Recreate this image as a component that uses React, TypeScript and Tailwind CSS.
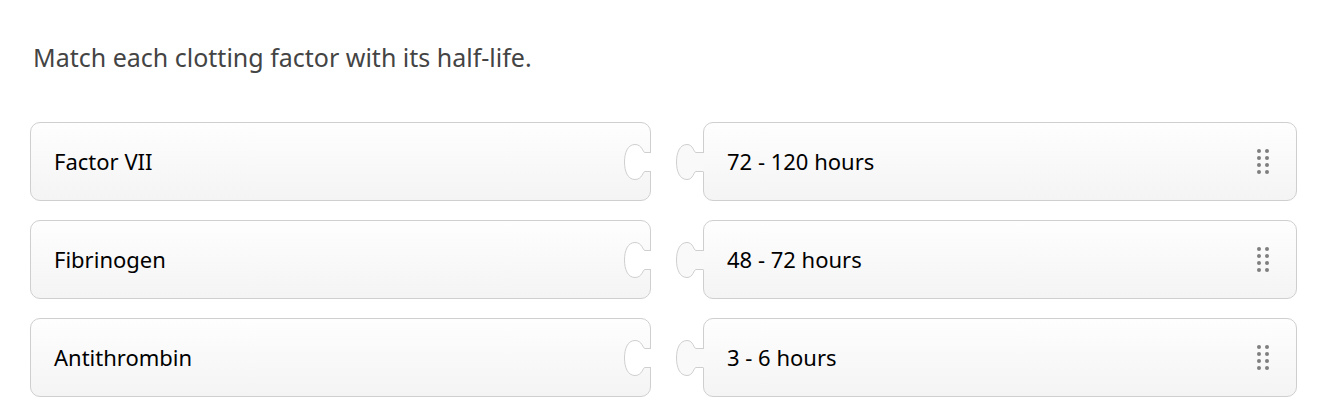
const rows = [
  { left: "Factor VII", right: "72 - 120 hours" },
  { left: "Fibrinogen", right: "48 - 72 hours" },
  { left: "Antithrombin", right: "3 - 6 hours" },
];

function Notch() {
  const d =
    "M28 9.5 H22 C19.5 9.5 19.5 1.5 12 1.5 C4.5 1.5 1.5 10 1.5 19 C1.5 28 4.5 36.5 12 36.5 C19.5 36.5 19.5 28.5 22 28.5 H28";
  return (
    <svg
      className="absolute right-[-1px] top-1/2 -translate-y-1/2"
      width="28"
      height="38"
      viewBox="0 0 28 38"
    >
      <path d={d + " Z"} fill="#ffffff" />
      <path d={d} fill="none" stroke="#cfcfcf" strokeWidth="1" />
    </svg>
  );
}

function Knob() {
  const d =
    "M29 9.5 H21 C18.5 9.5 18.5 1.5 12 1.5 C4.5 1.5 1.5 10 1.5 19 C1.5 28 4.5 36.5 12 36.5 C18.5 36.5 18.5 28.5 21 28.5 H29";
  return (
    <svg
      className="absolute left-[-29px] top-1/2 -translate-y-1/2"
      width="29"
      height="38"
      viewBox="0 0 29 38"
    >
      <path d={d + " Z"} fill="#f9f9f9" />
      <path d={d.replace(" H29", " H28")} fill="none" stroke="#cfcfcf" strokeWidth="1" />
    </svg>
  );
}

function Grip() {
  return (
    <div className="grid grid-cols-2 gap-x-[4px] gap-y-[3px]">
      {Array.from({ length: 8 }).map((_, i) => (
        <span key={i} className="block h-[4px] w-[4px] rounded-full bg-[#7f7f7f]" />
      ))}
    </div>
  );
}

export default function App() {
  return (
    <div
      className="min-h-[420px] bg-white pl-[30px] pt-[40px]"
      style={{ fontFamily: '"Noto Sans", "Open Sans", sans-serif' }}
    >
      <h1 className="pl-[3px] text-[25px] leading-[34px] text-[#444444]">
        Match each clotting factor with its half-life.
      </h1>

      <div className="mt-[48px] flex flex-col gap-[19px]">
        {rows.map((r) => (
          <div key={r.left} className="flex gap-[52px]">
            <div className="relative flex h-[79px] w-[621px] items-center rounded-[10px] border border-[#cfcfcf] bg-linear-to-b from-[#fefefe] to-[#f4f4f4] px-[23px] text-[22px] text-black">
              {r.left}
              <Notch />
            </div>
            <div className="relative flex h-[79px] w-[594px] items-center justify-between rounded-[10px] border border-[#cfcfcf] bg-linear-to-b from-[#fefefe] to-[#f4f4f4] pl-[23px] pr-[27px] text-[22px] text-black">
              {r.right}
              <Grip />
              <Knob />
            </div>
          </div>
        ))}
      </div>
    </div>
  );
}
